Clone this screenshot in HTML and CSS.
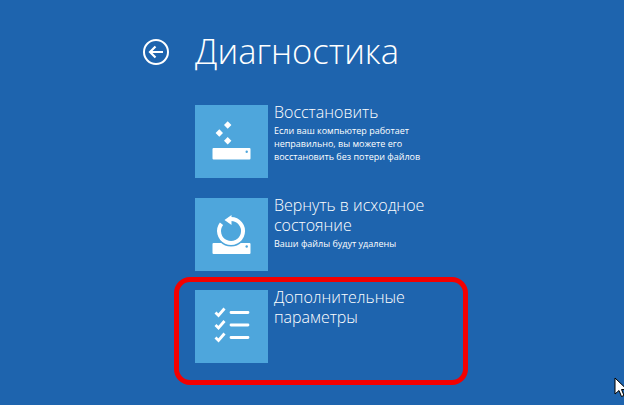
FILE: index.html
```html
<!DOCTYPE html>
<html lang="ru">
  <head>
    <meta charset="UTF-8" />
    <title>Диагностика</title>
    <link rel="stylesheet" href="styles.css">
  </head>
  <body>
    <header class="top">
      <svg class="back" width="28" height="28" viewBox="0 0 28 28" fill="none" stroke="#fff">
        <circle cx="14" cy="14" r="12" stroke-width="2" />
        <path d="M21 14H8M13.500 8.500L8 14l5.500 5.500" stroke-width="2.200" />
      </svg>
      <h1>Диагностика</h1>
    </header>

    <main class="list">
      <article class="item">
        <div class="tile">
          <svg width="73" height="73" viewBox="0 0 73 73" fill="#fff">
            <path d="M32.700 16.300l3.700 3.700-3.700 3.700-3.700-3.700zM24.300 24.300l3.700 3.700-3.700 3.700-3.700-3.700zM32.700 32l3.700 3.700-3.700 3.700-3.700-3.700z" />
            <rect x="17.500" y="43" width="38" height="11.500" rx="1" />
            <circle cx="51.700" cy="46.700" r="1.200" fill="#4ea6dc" />
          </svg>
        </div>
        <div class="info">
          <h2>Восстановить</h2>
          <p>Если ваш компьютер работает неправильно, вы можете его восстановить без потери файлов</p>
        </div>
      </article>

      <article class="item">
        <div class="tile">
          <svg width="73" height="73" viewBox="0 0 73 73" fill="none">
            <rect x="17.500" y="45" width="38" height="11" rx="1" fill="#fff" />
            <circle cx="36" cy="33" r="15.500" fill="#4ea6dc" />
            <circle cx="51.700" cy="48.500" r="1.200" fill="#4ea6dc" />
            <path d="M36 21A12 12 0 1 1 26.500 25.700" stroke="#fff" stroke-width="4" />
            <path d="M36.500 17v10l-7-5z" fill="#fff" />
          </svg>
        </div>
        <div class="info">
          <h2>Вернуть в исходное состояние</h2>
          <p>Ваши файлы будут удалены</p>
        </div>
      </article>

      <article class="item">
        <div class="tile">
          <svg width="73" height="73" viewBox="0 0 73 73" fill="none" stroke="#fff" stroke-width="2.800">
            <path d="M20.500 22.500l3 3 6-7M20.500 35l3 3 6-7M20.500 47.500l3 3 6-7" />
            <path d="M36 22.500h17M36 35h17M36 47.500h17" stroke-linecap="round" />
          </svg>
        </div>
        <div class="info">
          <h2>Дополнительные параметры</h2>
        </div>
      </article>
    </main>

    <div class="mark"></div>

    <svg class="cursor" width="14" height="22" viewBox="0 0 14 22">
      <path d="M1 1v16l4-3.500 2.500 6 2.500-1-2.500-6H13z" fill="#fff" stroke="#000" />
    </svg>
  </body>
</html>
```

FILE: styles.css
```css
* {
  margin: 0;
  padding: 0;
  box-sizing: border-box;
}

body {
  width: 624px;
  height: 405px;
  overflow: hidden;
  position: relative;
  background-color: #1e64ae;
  color: #fff;
  font-family: "Open Sans", "Noto Sans", sans-serif;
}

.top {
  display: flex;
  align-items: center;
  height: 105px;
  padding: 0 0 2px 142px;
}

.back {
  margin-right: 25px;
}

h1 {
  font-weight: 300;
  font-size: 34.500px;
  line-height: 44px;
  margin-top: -2px;
}

.list {
  display: flex;
  flex-direction: column;
  gap: 19.500px;
  padding-left: 195px;
}

.item {
  display: flex;
  gap: 6px;
  height: 73px;
}

.tile {
  width: 73px;
  height: 73px;
  flex-shrink: 0;
  background-color: #4ea6dc;
}

.tile svg {
  display: block;
}

.info {
  width: 165px;
  margin-top: -3px;
}

h2 {
  font-weight: 300;
  font-size: 16px;
  line-height: 20px;
}

p {
  font-size: 9px;
  line-height: 13px;
  margin-top: 2px;
}

.mark {
  position: absolute;
  left: 174px;
  top: 277px;
  width: 294px;
  height: 108px;
  border: 5px solid #f40000;
  border-radius: 16px;
}

.cursor {
  position: absolute;
  left: 614px;
  top: 377px;
}
```
